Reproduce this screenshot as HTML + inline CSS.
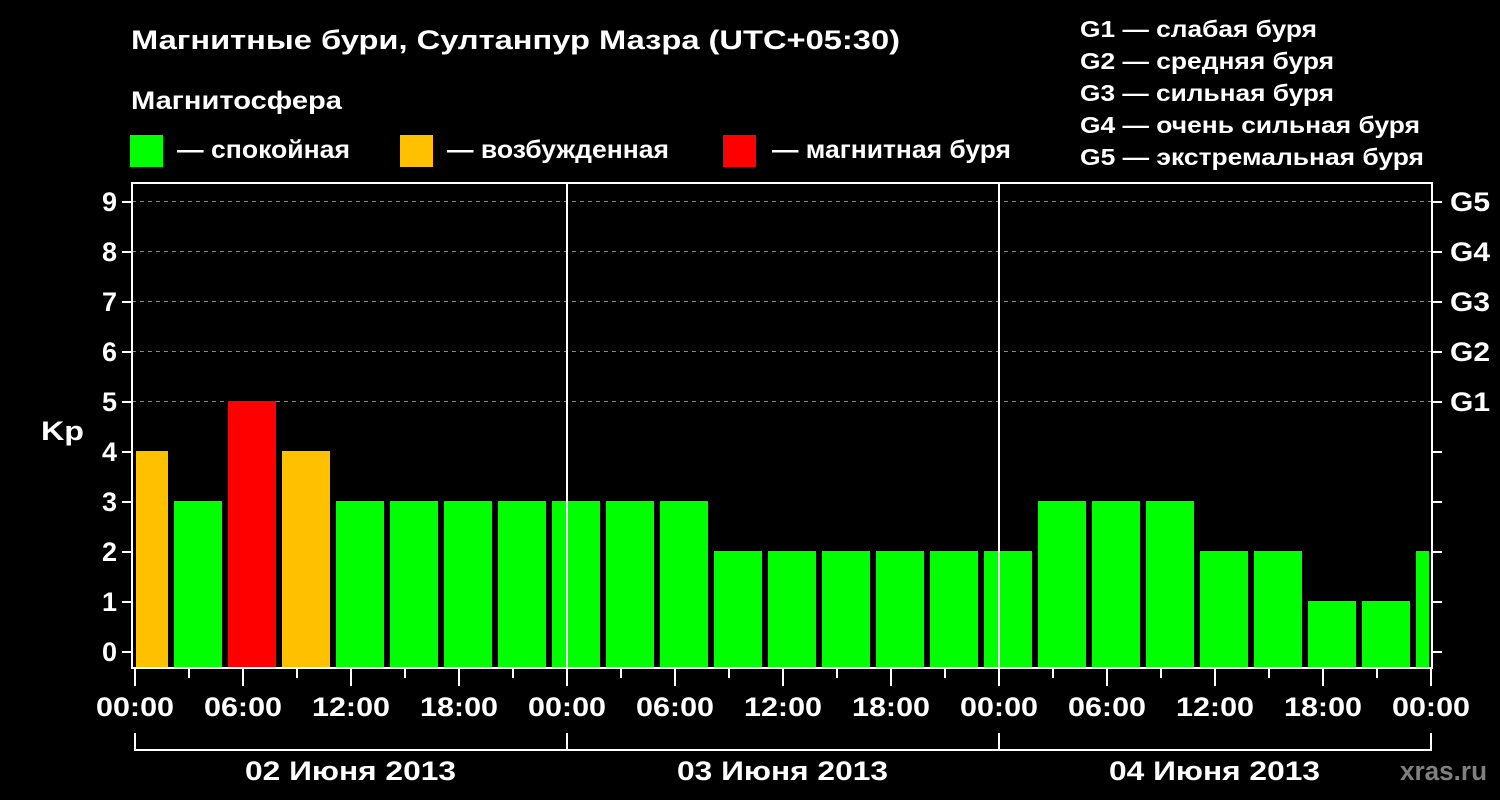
<!DOCTYPE html>
<html><head><meta charset="utf-8"><style>
html,body{margin:0;padding:0;background:#000;width:1500px;height:800px;overflow:hidden}
svg text{font-family:"Liberation Sans",sans-serif;font-weight:bold;fill:#fff}
</style></head><body>
<svg width="1500" height="800" xmlns="http://www.w3.org/2000/svg">
<rect width="1500" height="800" fill="#000"/>
<text x="131" y="49" font-size="27" textLength="769" lengthAdjust="spacingAndGlyphs">Магнитные бури, Султанпур Мазра (UTC+05:30)</text>
<text x="131" y="109" font-size="25" textLength="211" lengthAdjust="spacingAndGlyphs">Магнитосфера</text>
<rect x="130" y="135" width="33" height="32" fill="#00ff00"/>
<text x="177" y="158" font-size="25" textLength="173" lengthAdjust="spacingAndGlyphs">— спокойная</text>
<rect x="400" y="135" width="33" height="32" fill="#ffc000"/>
<text x="447" y="158" font-size="25" textLength="222" lengthAdjust="spacingAndGlyphs">— возбужденная</text>
<rect x="723" y="135" width="33" height="32" fill="#ff0000"/>
<text x="772" y="158" font-size="25" textLength="239" lengthAdjust="spacingAndGlyphs">— магнитная буря</text>
<g font-size="23">
<text x="1080" y="37" textLength="237" lengthAdjust="spacingAndGlyphs">G1 — слабая буря</text>
<text x="1080" y="69" textLength="254" lengthAdjust="spacingAndGlyphs">G2 — средняя буря</text>
<text x="1080" y="101" textLength="254" lengthAdjust="spacingAndGlyphs">G3 — сильная буря</text>
<text x="1080" y="133" textLength="340" lengthAdjust="spacingAndGlyphs">G4 — очень сильная буря</text>
<text x="1080" y="165" textLength="344" lengthAdjust="spacingAndGlyphs">G5 — экстремальная буря</text>
</g>
<g stroke="#888" stroke-width="1" stroke-dasharray="4,4">
<line x1="132" y1="201.5" x2="1432" y2="201.5"/>
<line x1="132" y1="251.5" x2="1432" y2="251.5"/>
<line x1="132" y1="301.5" x2="1432" y2="301.5"/>
<line x1="132" y1="351.5" x2="1432" y2="351.5"/>
<line x1="132" y1="401.5" x2="1432" y2="401.5"/>
</g>
<g>
<rect x="136" y="451" width="32" height="217" fill="#ffc000"/>
<rect x="174" y="501" width="48" height="167" fill="#00ff00"/>
<rect x="228" y="401" width="48" height="267" fill="#ff0000"/>
<rect x="282" y="451" width="48" height="217" fill="#ffc000"/>
<rect x="336" y="501" width="48" height="167" fill="#00ff00"/>
<rect x="390" y="501" width="48" height="167" fill="#00ff00"/>
<rect x="444" y="501" width="48" height="167" fill="#00ff00"/>
<rect x="498" y="501" width="48" height="167" fill="#00ff00"/>
<rect x="552" y="501" width="48" height="167" fill="#00ff00"/>
<rect x="606" y="501" width="48" height="167" fill="#00ff00"/>
<rect x="660" y="501" width="48" height="167" fill="#00ff00"/>
<rect x="714" y="551" width="48" height="117" fill="#00ff00"/>
<rect x="768" y="551" width="48" height="117" fill="#00ff00"/>
<rect x="822" y="551" width="48" height="117" fill="#00ff00"/>
<rect x="876" y="551" width="48" height="117" fill="#00ff00"/>
<rect x="930" y="551" width="48" height="117" fill="#00ff00"/>
<rect x="984" y="551" width="48" height="117" fill="#00ff00"/>
<rect x="1038" y="501" width="48" height="167" fill="#00ff00"/>
<rect x="1092" y="501" width="48" height="167" fill="#00ff00"/>
<rect x="1146" y="501" width="48" height="167" fill="#00ff00"/>
<rect x="1200" y="551" width="48" height="117" fill="#00ff00"/>
<rect x="1254" y="551" width="48" height="117" fill="#00ff00"/>
<rect x="1308" y="601" width="48" height="67" fill="#00ff00"/>
<rect x="1362" y="601" width="48" height="67" fill="#00ff00"/>
<rect x="1416" y="551" width="13" height="117" fill="#00ff00"/>
</g>
<g stroke="#fff" stroke-width="2" fill="none">
<rect x="132" y="183" width="1300" height="485"/>
<line x1="567" y1="183" x2="567" y2="668"/>
<line x1="999" y1="183" x2="999" y2="668"/>
</g>
<g stroke="#fff" stroke-width="2">
<line x1="122" y1="652" x2="132" y2="652"/><line x1="122" y1="602" x2="132" y2="602"/>
<line x1="122" y1="552" x2="132" y2="552"/><line x1="122" y1="502" x2="132" y2="502"/>
<line x1="122" y1="452" x2="132" y2="452"/><line x1="122" y1="402" x2="132" y2="402"/>
<line x1="122" y1="352" x2="132" y2="352"/><line x1="122" y1="302" x2="132" y2="302"/>
<line x1="122" y1="252" x2="132" y2="252"/><line x1="122" y1="202" x2="132" y2="202"/>
<line x1="1432" y1="652" x2="1442" y2="652"/><line x1="1432" y1="602" x2="1442" y2="602"/>
<line x1="1432" y1="552" x2="1442" y2="552"/><line x1="1432" y1="502" x2="1442" y2="502"/>
<line x1="1432" y1="452" x2="1442" y2="452"/><line x1="1432" y1="402" x2="1442" y2="402"/>
<line x1="1432" y1="352" x2="1442" y2="352"/><line x1="1432" y1="302" x2="1442" y2="302"/>
<line x1="1432" y1="252" x2="1442" y2="252"/><line x1="1432" y1="202" x2="1442" y2="202"/>
</g>
<g font-size="27" text-anchor="end">
<text x="117" y="661">0</text><text x="117" y="611">1</text><text x="117" y="561">2</text>
<text x="117" y="511">3</text><text x="117" y="461">4</text><text x="117" y="411">5</text>
<text x="117" y="361">6</text><text x="117" y="311">7</text><text x="117" y="261">8</text>
<text x="117" y="211">9</text>
</g>
<text x="41" y="440" font-size="27" textLength="43" lengthAdjust="spacingAndGlyphs">Kp</text>
<g font-size="27">
<text x="1450" y="411" textLength="40" lengthAdjust="spacingAndGlyphs">G1</text>
<text x="1450" y="361" textLength="40" lengthAdjust="spacingAndGlyphs">G2</text>
<text x="1450" y="311" textLength="40" lengthAdjust="spacingAndGlyphs">G3</text>
<text x="1450" y="261" textLength="40" lengthAdjust="spacingAndGlyphs">G4</text>
<text x="1450" y="211" textLength="40" lengthAdjust="spacingAndGlyphs">G5</text>
</g>
<g stroke="#fff" stroke-width="2">
<line x1="135" y1="668" x2="135" y2="686"/><line x1="189" y1="668" x2="189" y2="678"/>
<line x1="243" y1="668" x2="243" y2="686"/><line x1="297" y1="668" x2="297" y2="678"/>
<line x1="351" y1="668" x2="351" y2="686"/><line x1="405" y1="668" x2="405" y2="678"/>
<line x1="459" y1="668" x2="459" y2="686"/><line x1="513" y1="668" x2="513" y2="678"/>
<line x1="567" y1="668" x2="567" y2="686"/><line x1="621" y1="668" x2="621" y2="678"/>
<line x1="675" y1="668" x2="675" y2="686"/><line x1="729" y1="668" x2="729" y2="678"/>
<line x1="783" y1="668" x2="783" y2="686"/><line x1="837" y1="668" x2="837" y2="678"/>
<line x1="891" y1="668" x2="891" y2="686"/><line x1="945" y1="668" x2="945" y2="678"/>
<line x1="999" y1="668" x2="999" y2="686"/><line x1="1053" y1="668" x2="1053" y2="678"/>
<line x1="1107" y1="668" x2="1107" y2="686"/><line x1="1161" y1="668" x2="1161" y2="678"/>
<line x1="1215" y1="668" x2="1215" y2="686"/><line x1="1269" y1="668" x2="1269" y2="678"/>
<line x1="1323" y1="668" x2="1323" y2="686"/><line x1="1377" y1="668" x2="1377" y2="678"/>
<line x1="1431" y1="668" x2="1431" y2="686"/>
</g>
<g font-size="27">
<text x="96" y="716" textLength="78" lengthAdjust="spacingAndGlyphs">00:00</text>
<text x="204" y="716" textLength="78" lengthAdjust="spacingAndGlyphs">06:00</text>
<text x="312" y="716" textLength="78" lengthAdjust="spacingAndGlyphs">12:00</text>
<text x="420" y="716" textLength="78" lengthAdjust="spacingAndGlyphs">18:00</text>
<text x="528" y="716" textLength="78" lengthAdjust="spacingAndGlyphs">00:00</text>
<text x="636" y="716" textLength="78" lengthAdjust="spacingAndGlyphs">06:00</text>
<text x="744" y="716" textLength="78" lengthAdjust="spacingAndGlyphs">12:00</text>
<text x="852" y="716" textLength="78" lengthAdjust="spacingAndGlyphs">18:00</text>
<text x="960" y="716" textLength="78" lengthAdjust="spacingAndGlyphs">00:00</text>
<text x="1068" y="716" textLength="78" lengthAdjust="spacingAndGlyphs">06:00</text>
<text x="1176" y="716" textLength="78" lengthAdjust="spacingAndGlyphs">12:00</text>
<text x="1284" y="716" textLength="78" lengthAdjust="spacingAndGlyphs">18:00</text>
<text x="1392" y="716" textLength="78" lengthAdjust="spacingAndGlyphs">00:00</text>
</g>
<g stroke="#fff" stroke-width="2" fill="none">
<polyline points="135,733 135,750 1431,750 1431,733"/>
<line x1="567" y1="733" x2="567" y2="750"/>
<line x1="999" y1="733" x2="999" y2="750"/>
</g>
<g font-size="27">
<text x="245" y="780" textLength="211" lengthAdjust="spacingAndGlyphs">02 Июня 2013</text>
<text x="677" y="780" textLength="211" lengthAdjust="spacingAndGlyphs">03 Июня 2013</text>
<text x="1109" y="780" textLength="211" lengthAdjust="spacingAndGlyphs">04 Июня 2013</text>
</g>
<text x="1400" y="780" font-size="27" textLength="87" lengthAdjust="spacingAndGlyphs" style="fill:#808080">xras.ru</text>
</svg>
</body></html>
